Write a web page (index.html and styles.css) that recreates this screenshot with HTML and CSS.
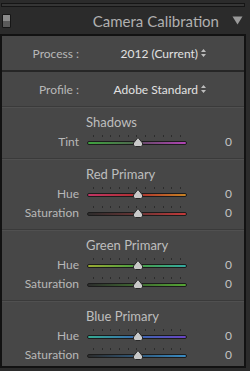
FILE: index.html
```html
<!DOCTYPE html>
<html>
<head>
  <title>Camera Calibration</title>
  <link rel="stylesheet" href="styles.css">
</head>
<body>
  <div class="strip"></div>
  <div class="header">
    <span class="toggle"></span>
    <h1>Camera Calibration</h1>
    <svg class="caret" width="11" height="9" viewBox="0 0 11 9"><path d="M0.5 0.5 H10.5 L5.5 8.5 Z" fill="#9a9a9a"/></svg>
  </div>
  <div class="panel">
    <div class="select-row">
      <span class="label">Process :</span>
      <span class="choice">2012 (Current)
        <svg class="updown" width="5" height="8" viewBox="0 0 5 8"><path d="M2.5 0 L5 3 H0 Z M0 5 H5 L2.5 8 Z" fill="#bdbdbd"/></svg>
      </span>
    </div>
    <div class="select-row">
      <span class="label">Profile :</span>
      <span class="choice">Adobe Standard
        <svg class="updown" width="5" height="8" viewBox="0 0 5 8"><path d="M2.5 0 L5 3 H0 Z M0 5 H5 L2.5 8 Z" fill="#bdbdbd"/></svg>
      </span>
    </div>

    <div class="section">
      <div class="section-title">Shadows</div>
      <div class="slider-row">
        <span class="label">Tint</span>
        <div class="slider tint"><span class="ticks"></span><svg class="thumb" width="12" height="10" viewBox="0 0 12 10"><path d="M6 0.5 L10.5 6 Q11.5 9.5 8.5 9.5 H3.5 Q0.5 9.5 1.5 6 Z" fill="#c9c9c9" stroke="#2a2a2a"/></svg></div>
        <span class="value">0</span>
      </div>
    </div>

    <div class="section">
      <div class="section-title">Red Primary</div>
      <div class="slider-row">
        <span class="label">Hue</span>
        <div class="slider red-hue"><span class="ticks"></span><svg class="thumb" width="12" height="10" viewBox="0 0 12 10"><path d="M6 0.5 L10.5 6 Q11.5 9.5 8.5 9.5 H3.5 Q0.5 9.5 1.5 6 Z" fill="#c9c9c9" stroke="#2a2a2a"/></svg></div>
        <span class="value">0</span>
      </div>
      <div class="slider-row">
        <span class="label">Saturation</span>
        <div class="slider red-sat"><span class="ticks"></span><svg class="thumb" width="12" height="10" viewBox="0 0 12 10"><path d="M6 0.5 L10.5 6 Q11.5 9.5 8.5 9.5 H3.5 Q0.5 9.5 1.5 6 Z" fill="#c9c9c9" stroke="#2a2a2a"/></svg></div>
        <span class="value">0</span>
      </div>
    </div>

    <div class="section">
      <div class="section-title">Green Primary</div>
      <div class="slider-row">
        <span class="label">Hue</span>
        <div class="slider green-hue"><span class="ticks"></span><svg class="thumb" width="12" height="10" viewBox="0 0 12 10"><path d="M6 0.5 L10.5 6 Q11.5 9.5 8.5 9.5 H3.5 Q0.5 9.5 1.5 6 Z" fill="#c9c9c9" stroke="#2a2a2a"/></svg></div>
        <span class="value">0</span>
      </div>
      <div class="slider-row">
        <span class="label">Saturation</span>
        <div class="slider green-sat"><span class="ticks"></span><svg class="thumb" width="12" height="10" viewBox="0 0 12 10"><path d="M6 0.5 L10.5 6 Q11.5 9.5 8.5 9.5 H3.5 Q0.5 9.5 1.5 6 Z" fill="#c9c9c9" stroke="#2a2a2a"/></svg></div>
        <span class="value">0</span>
      </div>
    </div>

    <div class="section last">
      <div class="section-title">Blue Primary</div>
      <div class="slider-row">
        <span class="label">Hue</span>
        <div class="slider blue-hue"><span class="ticks"></span><svg class="thumb" width="12" height="10" viewBox="0 0 12 10"><path d="M6 0.5 L10.5 6 Q11.5 9.5 8.5 9.5 H3.5 Q0.5 9.5 1.5 6 Z" fill="#c9c9c9" stroke="#2a2a2a"/></svg></div>
        <span class="value">0</span>
      </div>
      <div class="slider-row">
        <span class="label">Saturation</span>
        <div class="slider blue-sat"><span class="ticks"></span><svg class="thumb" width="12" height="10" viewBox="0 0 12 10"><path d="M6 0.5 L10.5 6 Q11.5 9.5 8.5 9.5 H3.5 Q0.5 9.5 1.5 6 Z" fill="#c9c9c9" stroke="#2a2a2a"/></svg></div>
        <span class="value">0</span>
      </div>
    </div>
  </div>
</body>
</html>
```

FILE: styles.css
```css
body {
  margin: 0;
  background: #2b2b2b;
  font-family: Lato, 'Open Sans', sans-serif;
  width: 246px;
  padding-top: 3px;
}
.strip {
  height: 2px;
  margin: 0 1px;
  background: #353535;
  border: 1px solid #151515;
}
.header {
  height: 27px;
  display: flex;
  align-items: center;
  padding: 0 3px 0 2px;
}
.toggle {
  width: 7px;
  height: 12px;
  border: 1px solid #161616;
  border-radius: 1px;
  background: linear-gradient(#8a8a8a 0 50%, #5a5a5a 50% 100%);
}
.header h1 {
  flex: 1;
  margin: 0 13px 0 0;
  text-align: right;
  font-size: 15px;
  font-weight: normal;
  color: #b0b0b0;
}
.panel {
  background: #474747;
  border: 2px solid #121212;
  height: 330px;
}
.select-row {
  height: 34px;
  display: grid;
  grid-template-columns: 77px 1fr;
  align-items: center;
  font-size: 12px;
  border-bottom: 2px solid #262626;
}
.select-row + .select-row { border-bottom: 1px solid #3a3a3a; }
.label {
  text-align: right;
  color: #b8b8b8;
}
.choice {
  justify-self: end;
  margin-right: 38px;
  color: #e2e2e2;
  display: flex;
  align-items: center;
  gap: 3px;
}
.section {
  border-top: 1px solid #505050;
  border-bottom: 1px solid #3a3a3a;
  padding: 5px 0 7px;
}
.section.last { border-bottom: none; padding-bottom: 0; }
.section-title {
  height: 19px;
  line-height: 19px;
  padding-left: 84px;
  font-size: 13px;
  color: #bebebe;
}
.slider-row {
  height: 19px;
  display: grid;
  grid-template-columns: 77px 100px 1fr;
  column-gap: 8px;
  align-items: center;
  font-size: 12px;
}
.slider {
  position: relative;
  height: 2px;
  margin-top: 2px;
  border: 1px solid #1c1c1c;
  border-radius: 3px;
}
.ticks {
  position: absolute;
  left: 5px;
  top: -7px;
  width: 89px;
  height: 2px;
  background: repeating-linear-gradient(90deg, #2c2c2c 0 1px, transparent 1px 8.7px);
}
.thumb {
  position: absolute;
  left: 44px;
  top: -5px;
}
.value {
  text-align: right;
  padding-right: 12px;
  color: #c2c2c2;
}
.tint { background: linear-gradient(90deg, #3fa43f, #4d6a4d 45%, #6a4a6c 55%, #b043b4); }
.red-hue { background: linear-gradient(90deg, #c03565, #b03030 50%, #c68224); }
.red-sat { background: linear-gradient(90deg, #2c2c2c, #6a3434 50%, #c43a3a); }
.green-hue { background: linear-gradient(90deg, #9aaa32, #4a9f42 50%, #34aaa2); }
.green-sat { background: linear-gradient(90deg, #2c2c2c, #3f6a30 50%, #55a535); }
.blue-hue { background: linear-gradient(90deg, #34aa92, #3a6ab0 50%, #6a44c4); }
.blue-sat { background: linear-gradient(90deg, #2c2c2c, #30587a 50%, #3a8cc4); }
```
